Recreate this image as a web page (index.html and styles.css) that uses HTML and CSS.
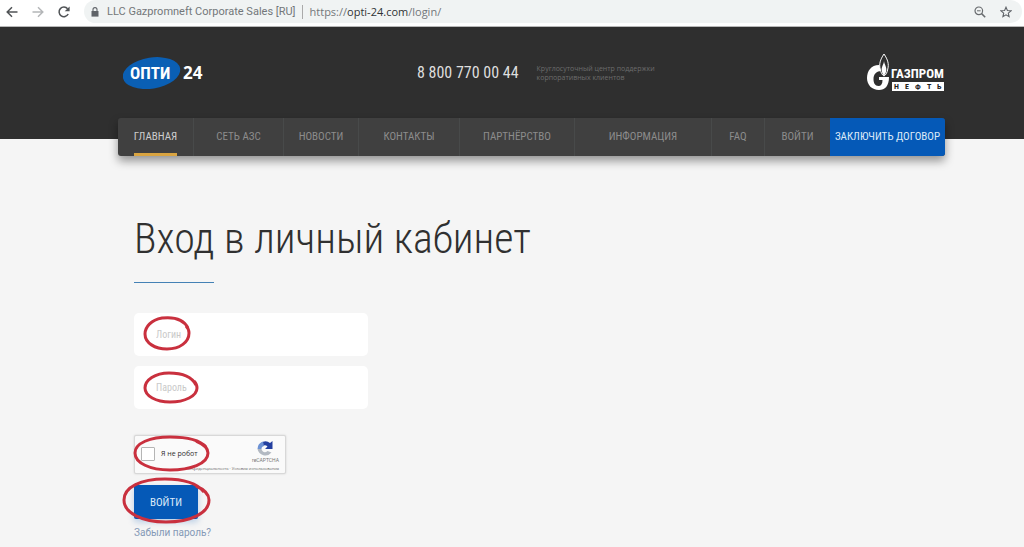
FILE: index.html
```html
<!DOCTYPE html>
<html lang="ru">
<head>
<meta charset="utf-8">
<meta name="viewport" content="width=device-width, initial-scale=1">
<title>Вход в личный кабинет</title>
<link rel="stylesheet" href="styles.css">
</head>
<body>
<div class="browser">
  <button class="tool" aria-label="Назад"><svg width="12" height="12" viewBox="0 0 12 12"><path d="M11.5 6H1.5M6 1.2 1.2 6 6 10.8" fill="none" stroke="#505356" stroke-width="1.5"/></svg></button>
  <button class="tool" aria-label="Вперёд"><svg width="12" height="12" viewBox="0 0 12 12"><path d="M.5 6h10M6 1.2 10.8 6 6 10.8" fill="none" stroke="#b4b6b8" stroke-width="1.5"/></svg></button>
  <button class="tool" aria-label="Обновить"><svg width="12" height="12" viewBox="0 0 12 12"><path d="M10.2 8A4.8 4.8 0 1 1 9.6 2.8" fill="none" stroke="#505356" stroke-width="1.5"/><path d="M11.6.4v4.9H6.7z" fill="#505356"/></svg></button>
  <div class="address">
    <svg class="lock" width="8" height="10" viewBox="0 0 8 10"><path d="M.5 4h7v5.6h-7z" fill="#5f6368"/><path d="M2 4.4V2.6a2 2 0 0 1 4 0v1.8" fill="none" stroke="#5f6368" stroke-width="1.1"/></svg>
    <span class="owner">LLC Gazpromneft Corporate Sales [RU]</span>
    <span class="url">https://<b>opti-24.com</b>/login/</span>
    <button class="tool" aria-label="Масштаб"><svg width="12" height="12" viewBox="0 0 12 12"><circle cx="4.8" cy="4.8" r="3.8" fill="none" stroke="#686b6e" stroke-width="1.2"/><path d="M3 4.8h3.6" stroke="#686b6e"/><path d="m7.6 7.6 3.6 3.6" stroke="#686b6e" stroke-width="1.5"/></svg></button>
    <button class="tool" aria-label="В закладки"><svg width="12" height="12" viewBox="0 0 12 12"><path d="m6 1.2 1.4 3.3 3.6.3-2.7 2.4.8 3.5L6 8.8l-3.1 1.9.8-3.5L1 4.8l3.6-.3z" fill="none" stroke="#5f6368" stroke-width="1.1"/></svg></button>
  </div>
</div>

<header class="header">
  <div class="top">
    <a class="brand" href="#" aria-label="ОПТИ 24">
      <svg width="82" height="36" viewBox="0 0 82 36"><ellipse cx="28.5" cy="18" rx="29" ry="15.5" transform="rotate(-9 29 18)" fill="#0a5fb4"/><text class="brand-name" x="7" y="24">ОПТИ</text><text class="brand-num" x="60" y="24">24</text></svg>
    </a>
    <a class="phone" href="tel:88007700044">8 800 770 00 44</a>
    <p class="support">Круглосуточный центр поддержки<br>корпоративных клиентов</p>
    <a class="gazprom" href="#" aria-label="Газпром нефть">
      <svg width="80" height="40" viewBox="0 0 80 40">
        <path d="M14 12C6 12 2 18 2 25c0 7 5 12 12 12 6 0 10-4 10-13H14v3h3.5c0 4-1.5 6-4 6-3.5 0-5-3-5-7 0-5 3-8 8-8v-5z" fill="#fff"/>
        <path d="M19 1c-4 6-5 10-3.8 15 .7 4 2 6 3.8 7 1.8-1 3.1-3 3.8-7C24 11 23 7 19 1z" fill="#303030" stroke="#fff"/>
        <path d="M19 8c-.4 4-3 6-2.2 10 .4 2 1.2 3.5 2.2 4.5 1-1 1.8-2.5 2.2-4.5C22 14 19.5 12 19 8z" fill="#fff"/>
        <path d="M27 29h52v9H27z" fill="#fff"/>
        <text class="gaz" x="26" y="25">ГАЗПРОМ</text>
        <text class="neft" y="36" x="29 40 50 62 72">НЕФТЬ</text>
      </svg>
    </a>
  </div>
  <nav class="nav">
    <a class="active" href="#"><span>ГЛАВНАЯ</span></a>
    <a href="#">СЕТЬ АЗС</a>
    <a href="#">НОВОСТИ</a>
    <a href="#">КОНТАКТЫ</a>
    <a href="#">ПАРТНЁРСТВО</a>
    <a href="#">ИНФОРМАЦИЯ</a>
    <a href="#">FAQ</a>
    <a href="#">ВОЙТИ</a>
    <a class="contract" href="#">ЗАКЛЮЧИТЬ ДОГОВОР</a>
  </nav>
</header>

<main class="main">
  <h1 class="title">Вход в личный кабинет</h1>
  <form class="form">
    <div class="field">
      <input type="text" placeholder="Логин" aria-label="Логин">
      <svg class="ring ring-login" viewBox="0 0 48 36" aria-hidden="true"><path d="M45 12C40 2 28 1 19 2 8 4 2 11 2 18c0 9 10 15 22 15 13 0 22-7 22-16 0-3-1-5-3-7"/></svg>
    </div>
    <div class="field">
      <input type="password" placeholder="Пароль" aria-label="Пароль">
      <svg class="ring ring-password" viewBox="0 0 56 34" aria-hidden="true"><path d="M53 14C48 4 36 2 26 2 12 2 2 9 2 17c0 8 11 14 25 14 15 0 27-6 27-14 0-3-1-5-3-7"/></svg>
    </div>
    <div class="captcha">
      <label class="robot"><input type="checkbox">Я не робот</label>
      <div class="captcha-logo">
        <svg width="18" height="17" viewBox="0 0 18 17"><path d="M5 3A7 7 0 0 1 14 3l2.500-2v8H9l2.500-2.500C10 5 8 5 7 6z" fill="#2440a0"/><path d="M1.500 9H5.500C6 12 9 13.500 11.500 11l4 1.500A8 8 0 0 1 1.500 9z" fill="#b3b9c2"/><path d="M1.500 9A8 8 0 0 1 7 1.500L8 6C6 6.500 5.500 7.500 5.500 9z" fill="#6d92d4"/></svg>
        <span>reCAPTCHA</span>
      </div>
      <small class="terms">Конфиденциальность · Условия использования</small>
      <svg class="ring ring-robot" viewBox="0 0 78 38" aria-hidden="true"><path d="M73 12C66 4 51 2 37 2 17 2 2 8 2 18c0 10 15 17 35 17s38-6 38-17c0-5-5-9-12-12"/></svg>
    </div>
    <div class="submit">
      <button type="button">ВОЙТИ</button>
      <svg class="ring ring-submit" viewBox="0 0 90 48" aria-hidden="true"><path d="M82 15C74 5 60 2 43 2 19 2 2 10 2 23c0 13 18 22 42 22 25 0 43-9 43-22 0-6-6-11-13-14"/></svg>
    </div>
    <a class="forgot" href="#">Забыли пароль?</a>
  </form>
</main>
</body>
</html>
```
FILE: styles.css
```css
* { box-sizing: border-box; }
body {
  margin: 0;
  background: #f5f5f5;
  color: #303030;
  font-family: Roboto, "Liberation Sans", sans-serif;
}
a { color: inherit; text-decoration: none; }
svg { display: block; }
button { border: 0; padding: 0; background: none; }

.browser {
  display: flex;
  align-items: center;
  gap: 14px;
  height: 27px;
  padding: 0 2px 3px 6px;
  background: #fff;
  border-bottom: 1px solid #b8b8b8;
}
.address {
  flex: 1;
  display: flex;
  align-items: center;
  height: 23px;
  padding: 0 10px 0 7px;
  border-radius: 12px;
  background: #f0f3f3;
  color: #73777a;
  font: 11px/23px Roboto, sans-serif;
}
.address .tool + .tool { margin-left: 14px; }
.lock { margin-right: 8px; }
.owner { padding-right: 6px; line-height: 14px; border-right: 1px solid #aaa; }
.url { flex: 1; padding-left: 7px; font-family: "Open Sans", sans-serif; }
.url b { font-weight: 400; color: #303336; }

.header {
  height: 112px;
  padding: 0 79px 0 118px;
  background: #2f2f2f;
}
.top { display: flex; align-items: center; height: 91px; padding-left: 5px; }
.brand-name, .brand-num { fill: #fff; font-weight: 700; }
.brand-name { font-family: "Roboto Condensed", Roboto, sans-serif; font-size: 17px; }
.brand-num { font-family: "Open Sans", sans-serif; font-size: 17px; }
.phone {
  margin-left: 212px;
  color: #dedede;
  font: 16px/20px "Roboto Condensed", Roboto, sans-serif;
}
.support { margin: 4px auto 4px 18px; color: #6c6c6c; font: 7px/9px "Open Sans", sans-serif; }
.gaz { fill: #fff; font: 700 13px "Roboto Condensed", Roboto, sans-serif; }
.neft { fill: #222; font: 700 8px "Roboto Condensed", Roboto, sans-serif; }

.nav {
  display: grid;
  grid-template-columns: 75fr 90fr 75fr 101fr 115fr 137fr 53fr 66fr 115fr;
  height: 38px;
  border-radius: 3px;
  background: #404040;
  box-shadow: 0 5px 10px rgba(0, 0, 0, .4);
  color: #8c8c8c;
  font: 11px/37px "Roboto Condensed", Roboto, sans-serif;
  text-align: center;
  white-space: nowrap;
}
.nav a + a { border-left: 1px solid #484a4a; }
.nav .active { display: flex; justify-content: center; color: #ccc; }
.active span { height: 38px; border-bottom: 3px solid #d9a441; }
.nav .contract { border: 0; border-radius: 0 3px 3px 0; background: #0559b7; color: #dce9f7; }

.main { padding: 74px 79px 8px 134px; }
.title {
  margin: 0;
  font: 300 42px/52px "Roboto Condensed", Roboto, sans-serif;
}
.title::after { content: ""; display: block; width: 80px; height: 1px; margin-top: 17px; background: #4481b5; }
.form { display: flex; flex-direction: column; align-items: flex-start; padding-top: 30px; }
.field { position: relative; width: 234px; max-width: 100%; margin-bottom: 10px; }
.field input {
  display: block;
  width: 100%;
  height: 43px;
  padding: 0 22px;
  border: 0;
  border-radius: 5px;
  background: #fff;
  font: 10px "Roboto Condensed", Roboto, sans-serif;
}
.field input::placeholder { color: #c9c9c9; }
.ring { position: absolute; fill: none; stroke: #c9303e; stroke-width: 3px; pointer-events: none; }
.ring-login { left: 9px; top: 3px; width: 48px; }
.ring-password { left: 9px; top: 5px; width: 56px; }
.ring-robot { left: -2px; top: -1px; width: 78px; }
.ring-submit { left: -12px; top: -8px; width: 90px; }

.captcha {
  position: relative;
  display: grid;
  grid-template-columns: 1fr auto;
  width: 152px;
  height: 39px;
  margin-top: 16px;
  padding: 4px 6px 0 6px;
  border: 1px solid #d8d8d8;
  border-radius: 2px;
  background: #fafafa;
  box-shadow: 0 0 2px #ccc;
}
.robot { display: flex; align-items: center; gap: 6px; height: 27px; font: 7px "Open Sans", sans-serif; }
.robot input { appearance: none; width: 14px; height: 14px; margin: 0; border: 1px solid #b5b5b5; border-radius: 1px; background: #fff; }
.captcha-logo { display: flex; flex-direction: column; align-items: center; color: #777; font: 5px/7px Roboto, sans-serif; }
.terms { grid-column: 1 / -1; justify-self: end; margin-top: -3px; color: #666; font: 4px/6px "Open Sans", sans-serif; }
.submit { position: relative; margin-top: 11px; }
.submit button {
  width: 64px;
  height: 34px;
  border-radius: 2px;
  background: #0559b7;
  box-shadow: 0 3px 6px rgba(5, 89, 183, .25);
  color: #dce9f7;
  font: 11px "Roboto Condensed", Roboto, sans-serif;
}
.forgot { margin-top: 7px; color: #8499b5; font: 10px/14px Roboto, sans-serif; }
```
